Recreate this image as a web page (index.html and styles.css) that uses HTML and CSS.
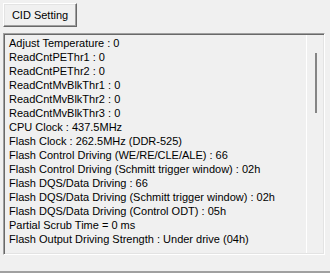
FILE: index.html
```html
<html>
<head>
<meta charset="utf-8">
<title>CID Setting</title>
<link rel="stylesheet" href="styles.css">
</head>
<body>
<div class="panel">
  <div class="toolbar">
    <button class="button" type="button">CID Setting</button>
  </div>
  <div class="infobox">
    <div class="lines">
      <div>Adjust Temperature : 0</div>
      <div>ReadCntPEThr1 : 0</div>
      <div>ReadCntPEThr2 : 0</div>
      <div>ReadCntMvBlkThr1 : 0</div>
      <div>ReadCntMvBlkThr2 : 0</div>
      <div>ReadCntMvBlkThr3 : 0</div>
      <div>CPU Clock : 437.5MHz</div>
      <div>Flash Clock : 262.5MHz (DDR-525)</div>
      <div>Flash Control Driving (WE/RE/CLE/ALE) : 66</div>
      <div>Flash Control Driving (Schmitt trigger window) : 02h</div>
      <div>Flash DQS/Data Driving : 66</div>
      <div>Flash DQS/Data Driving (Schmitt trigger window) : 02h</div>
      <div>Flash DQS/Data Driving (Control ODT) : 05h</div>
      <div>Partial Scrub Time = 0 ms</div>
      <div>Flash Output Driving Strength : Under drive (04h)</div>
    </div>
    <div class="scrollbar"><div class="thumb"></div></div>
  </div>
  <div class="statusline"></div>
</div>
</body>
</html>
```
FILE: styles.css
```css
body {
    margin: 0;
    background: #f0f0f0;
    font-family: "Liberation Sans", Arial, sans-serif;
    font-size: 11px;
    color: #000;
    overflow: hidden;
    }
.panel {
    display: flex;
    flex-direction: column;
    width: 330px;
    height: 273px;
    }
.toolbar {
    padding: 3px 0 0 3px;
    height: 24px;
    }
.button {
    width: 74px;
    height: 24px;
    margin: 0;
    padding: 0;
    font-family: "Liberation Sans", Arial, sans-serif;
    font-size: 11px;
    color: #000;
    background: #f0f0f0;
    border: 1px solid;
    border-color: #fff #696969 #696969 #fff;
    box-shadow: inset -1px -1px 0 #a0a0a0, inset 1px 1px 0 #e3e3e3;
    }
.infobox {
    display: flex;
    margin: 6px 0 0 3px;
    width: 322px;
    height: 222px;
    box-sizing: border-box;
    border: 1px solid;
    border-color: #a0a0a0 #fff #fff #a0a0a0;
    box-shadow: inset 1px 1px 0 #696969, inset -1px -1px 0 #e3e3e3;
    }
.lines {
    flex: 1;
    padding: 2px 0 0 5px;
    line-height: 14px;
    white-space: nowrap;
    overflow: hidden;
    }
.scrollbar {
    width: 16px;
    margin: 1px 1px 1px 0;
    border-left: 1px solid #fff;
    display: flex;
    justify-content: center;
    padding-top: 18px;
    }
.thumb {
    width: 2px;
    height: 60px;
    margin-left: 1px;
    background: #858585;
    }
.statusline {
    margin-top: auto;
    height: 2px;
    background: #a0a0a0;
    }
```
